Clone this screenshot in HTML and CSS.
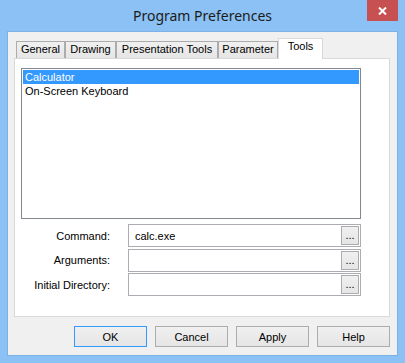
FILE: index.html
```html
<!DOCTYPE html>
<html lang="en">
<head>
    <meta charset="UTF-8">
    <title>Program Preferences</title>
    <link rel="stylesheet" href="styles.css">
</head>
<body>

<div class="window">
    <div class="titlebar">
        <span></span>
        <div class="title">Program Preferences</div>
        <div class="close">
            <svg width="9" height="8" viewBox="0 0 9 8">
                <path d="M1 0.5 L8 7.5 M8 0.5 L1 7.5" stroke="#fff" stroke-width="2"/>
            </svg>
        </div>
    </div>

    <div class="client">
        <!-- tab strip -->
        <div class="tabs">
            <div class="tab tab-general">General</div>
            <div class="tab tab-drawing">Drawing</div>
            <div class="tab tab-presentation">Presentation Tools</div>
            <div class="tab tab-parameter">Parameter</div>
            <div class="tab tab-tools active">Tools</div>
        </div>

        <div class="panel">
            <div class="listbox">
                <div class="item selected">Calculator</div>
                <div class="item">On-Screen Keyboard</div>
            </div>

            <div class="fields">
                <div class="field">
                    <label>Command:</label>
                    <div class="edit"><span>calc.exe</span><button class="browse">...</button></div>
                </div>
                <div class="field">
                    <label>Arguments:</label>
                    <div class="edit"><span></span><button class="browse">...</button></div>
                </div>
                <div class="field">
                    <label>Initial Directory:</label>
                    <div class="edit"><span></span><button class="browse">...</button></div>
                </div>
            </div>
        </div>

        <div class="buttons">
            <button class="btn default">OK</button>
            <button class="btn">Cancel</button>
            <button class="btn">Apply</button>
            <button class="btn">Help</button>
        </div>
    </div>
</div>

</body>
</html>
```

FILE: styles.css
```css
body {
    margin: 0;
    padding: 0;
    font-family: 'Liberation Sans', Arial, sans-serif;
    font-size: 11px;
    color: #000;
}

.window {
    width: 405px;
    height: 363px;
    background-color: #8bc1f4;
    display: flex;
    flex-direction: column;
}

.titlebar {
    height: 31px;
    display: grid;
    grid-template-columns: 1fr auto 1fr;
    align-items: center;
}

.title {
    font-family: 'Noto Sans', sans-serif;
    font-size: 14px;
    color: #1b1b1b;
    margin-top: -1px;
}

.close {
    justify-self: end;
    align-self: start;
    width: 31px;
    height: 21px;
    margin-right: 7px;
    background-color: #c75050;
    display: flex;
    align-items: center;
    justify-content: center;
}

.close svg {
    display: block;
}

.client {
    box-sizing: border-box;
    height: 325px;
    margin: 0 7px;
    border: 1px solid #7cb1e6;
    background-color: #f0f0f0;
    padding: 6px 7px 0 6px;
}

/* tabs */

.tabs {
    display: flex;
    align-items: flex-end;
    height: 20px;
    margin-left: 2px;
}

.tab {
    box-sizing: border-box;
    height: 17px;
    line-height: 15px;
    text-align: center;
    white-space: nowrap;
    border: 1px solid #acacac;
    border-bottom: none;
    background: linear-gradient(#f0f0f0, #e5e5e5);
}

.tab-general { width: 49px; }
.tab-drawing { width: 51px; }
.tab-presentation { width: 102px; }
.tab-parameter { width: 60px; }
.tab-tools { width: 45px; }

.tab.active {
    height: 21px;
    margin-bottom: -1px;
    padding-bottom: 3px;
    background: #fff;
    border-color: #d9d9d9;
    position: relative;
    z-index: 1;
}

.panel {
    box-sizing: border-box;
    width: 376px;
    height: 259px;
    border: 1px solid #d9d9d9;
    background-color: #fff;
    padding: 9px 0 0 6px;
}

.listbox {
    box-sizing: border-box;
    width: 340px;
    height: 151px;
    border: 1px solid #828790;
    padding: 1px;
}

.item {
    height: 14px;
    line-height: 14px;
    padding-left: 2px;
}

.item.selected {
    background-color: #3399ff;
    color: #fff;
}

/* edit rows */

.fields {
    margin-top: 5px;
    display: flex;
    flex-direction: column;
    gap: 1.5px;
}

.field {
    display: flex;
    align-items: center;
    height: 23px;
}

.field label {
    width: 89px;
    text-align: right;
    margin-right: 18px;
}

.edit {
    box-sizing: border-box;
    width: 233px;
    height: 23px;
    border: 1px solid #abadb3;
    background-color: #fff;
    display: flex;
    align-items: center;
    padding-left: 6px;
}

.browse {
    box-sizing: border-box;
    width: 18px;
    height: 19px;
    margin-left: auto;
    margin-right: 1px;
    padding: 0;
    border: 1px solid #acacac;
    background: linear-gradient(#f0f0f0, #e5e5e5);
    font-family: inherit;
    font-size: 11px;
    line-height: 11px;
    color: #000;
}

/* dialog buttons */

.buttons {
    display: flex;
    justify-content: flex-end;
    gap: 8px;
    margin-top: 9px;
}

.btn {
    box-sizing: border-box;
    width: 73px;
    height: 21px;
    padding: 0;
    border: 1px solid #acacac;
    background: linear-gradient(#f0f0f0, #e5e5e5);
    font-family: inherit;
    font-size: 11px;
    color: #000;
}

.btn.default {
    border-color: #3399ff;
}
```
